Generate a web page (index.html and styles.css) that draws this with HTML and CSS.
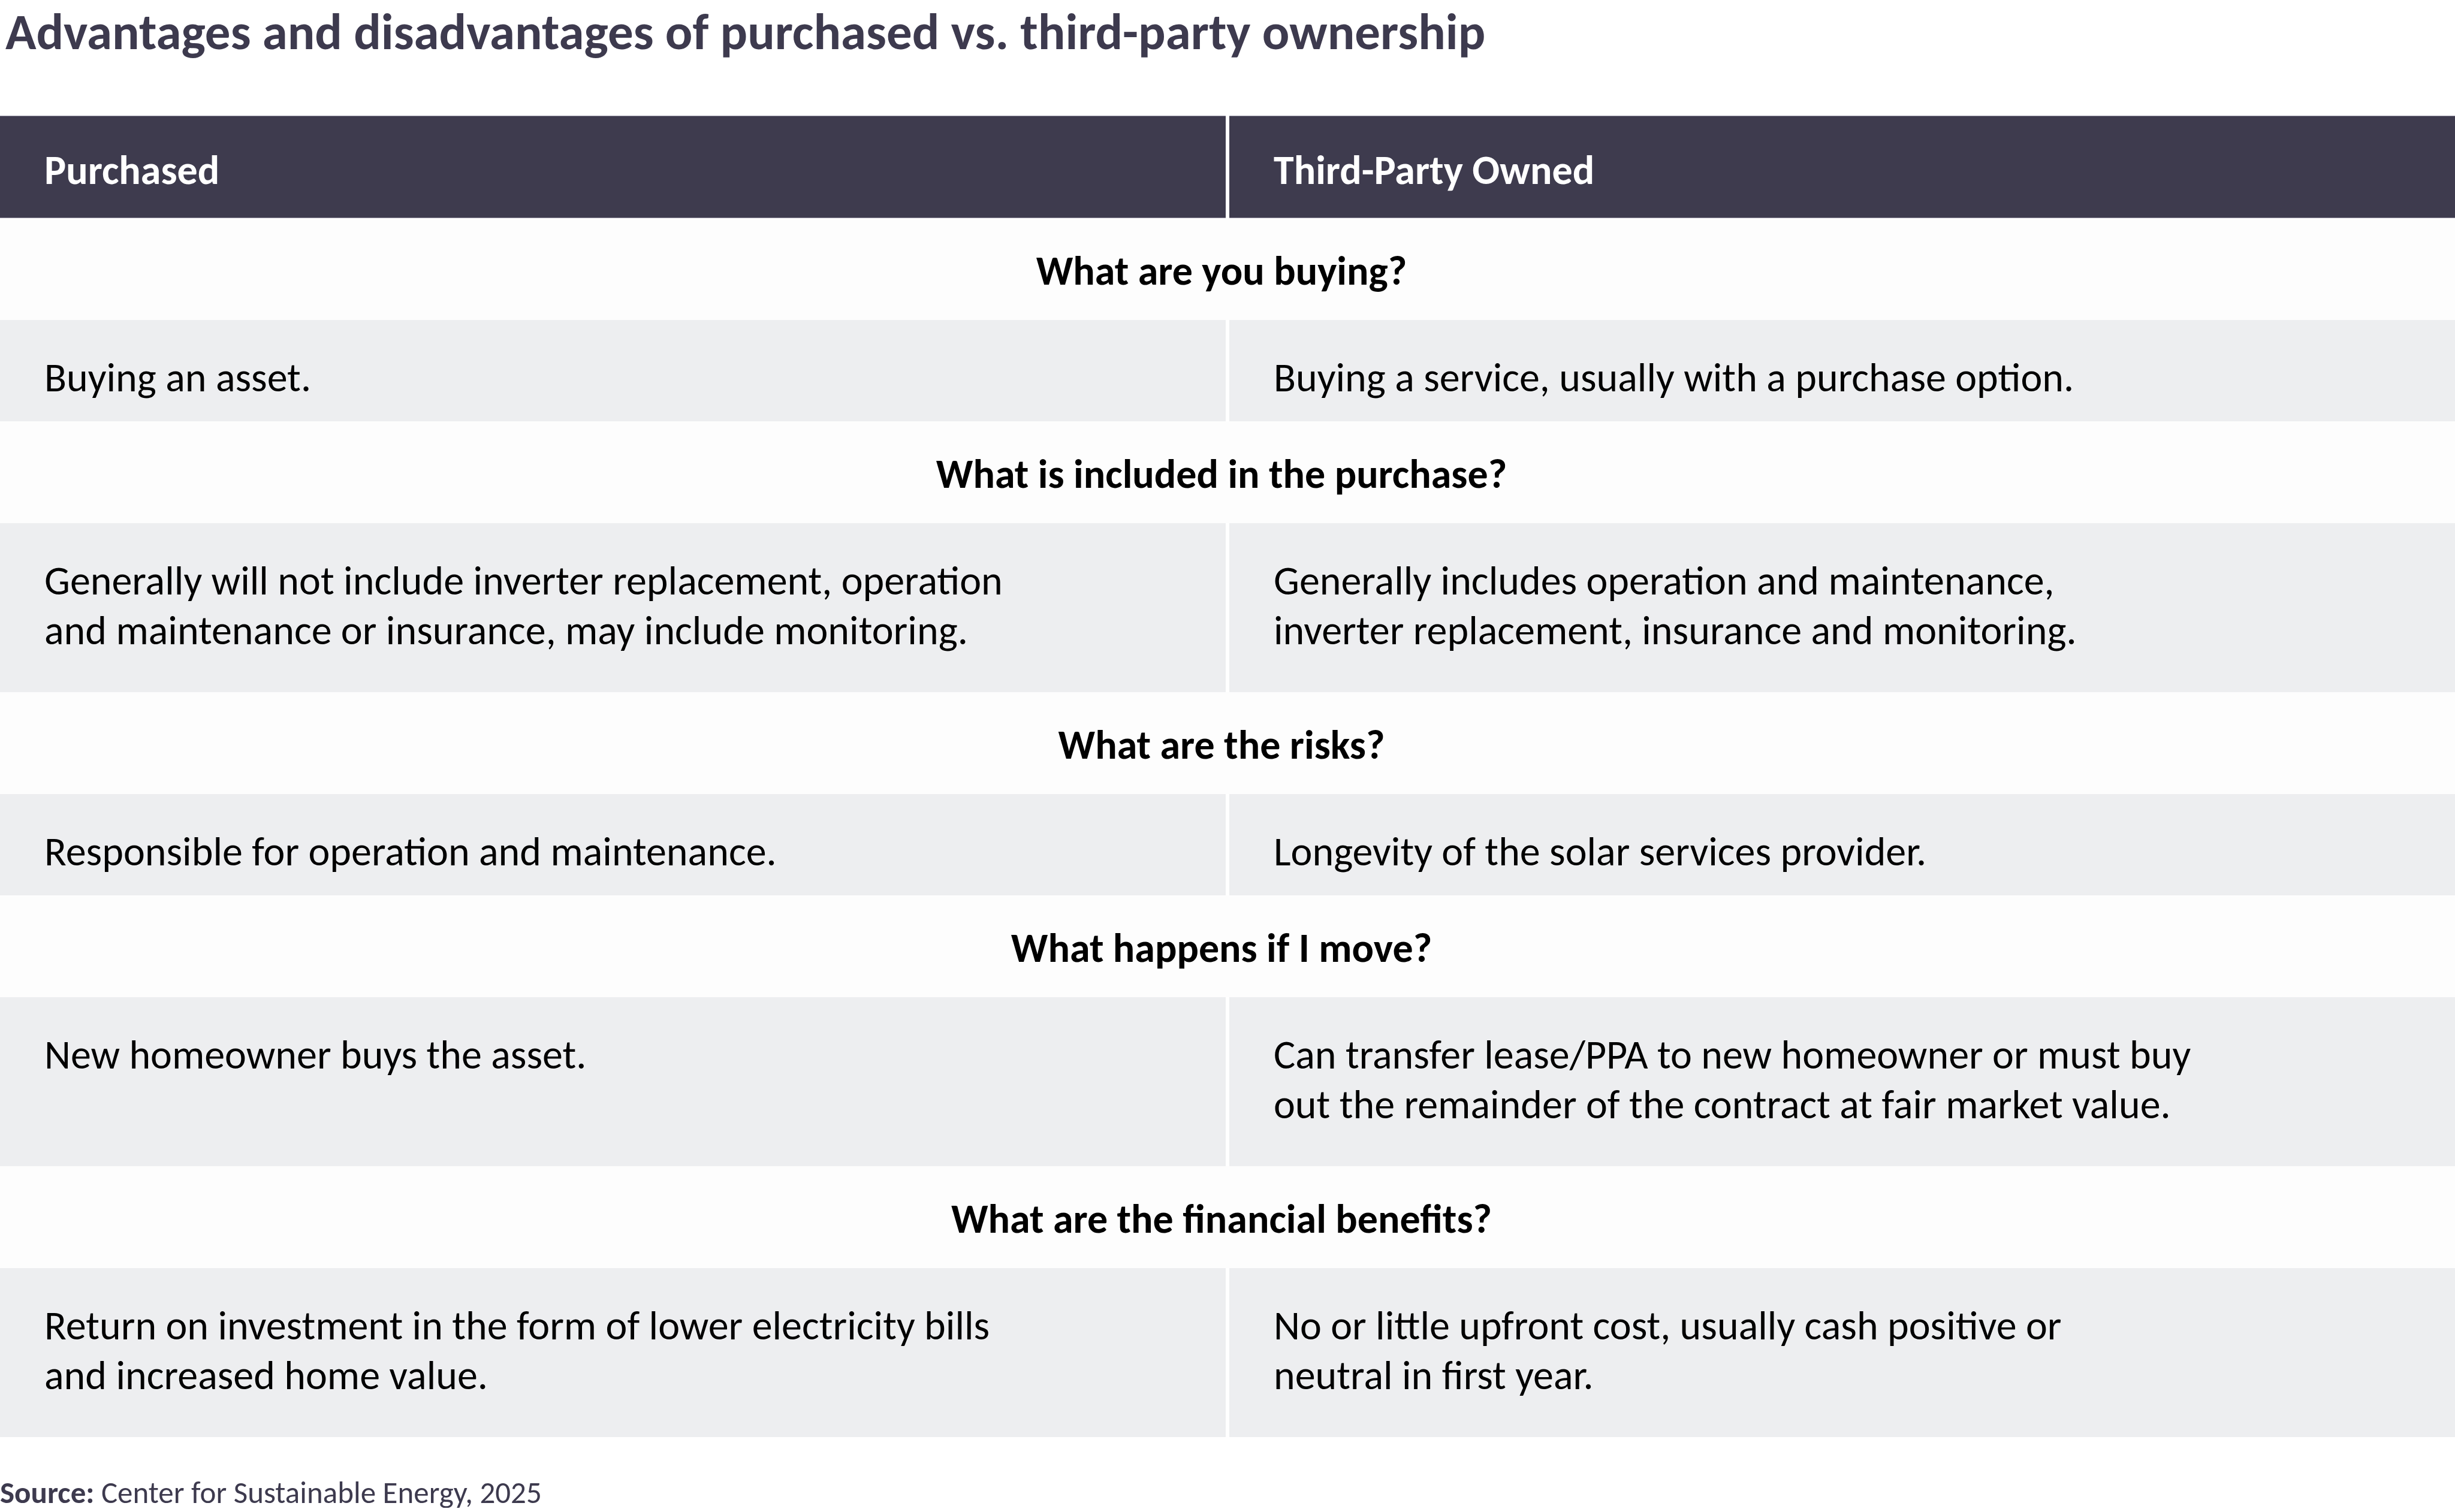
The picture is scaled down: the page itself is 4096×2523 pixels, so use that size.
FILE: index.html
```html
<!DOCTYPE html>
<html lang="en">
<head>
<meta charset="utf-8">
<title>Advantages and disadvantages of purchased vs. third-party ownership</title>
<link rel="stylesheet" href="styles.css">
</head>
<body>
<div class="page">
  <h1 class="title">Advantages and disadvantages of purchased vs. third-party ownership</h1>
  <div class="table">
    <div class="row head">
      <div class="cell">Purchased</div>
      <div class="cell">Third-Party Owned</div>
    </div>
    <div class="question">What are you buying?</div>
    <div class="row body">
      <div class="cell">Buying an asset.</div>
      <div class="cell">Buying a service, usually with a purchase option.</div>
    </div>
    <div class="question">What is included in the purchase?</div>
    <div class="row body tall">
      <div class="cell">Generally will not include inverter replacement, operation<br>and maintenance or insurance, may include monitoring.</div>
      <div class="cell">Generally includes operation and maintenance,<br>inverter replacement, insurance and monitoring.</div>
    </div>
    <div class="question">What are the risks?</div>
    <div class="row body">
      <div class="cell">Responsible for operation and maintenance.</div>
      <div class="cell">Longevity of the solar services provider.</div>
    </div>
    <div class="question">What happens if I move?</div>
    <div class="row body tall">
      <div class="cell">New homeowner buys the asset.</div>
      <div class="cell">Can transfer lease/PPA to new homeowner or must buy<br>out the remainder of the contract at fair market value.</div>
    </div>
    <div class="question">What are the financial benefits?</div>
    <div class="row body tall">
      <div class="cell">Return on investment in the form of lower electricity bills<br>and increased home value.</div>
      <div class="cell">No or little upfront cost, usually cash positive or<br>neutral in first year.</div>
    </div>
  </div>
  <p class="source"><strong>Source:</strong> Center for Sustainable Energy, 2025</p>
</div>
</body>
</html>
```

FILE: styles.css
```css
html, body {
  margin: 0;
  padding: 0;
  background: #ffffff;
}

.page {
  width: 4096px;
  font-family: "Carlito", "Calibri", "Lato", "Open Sans", sans-serif;
  color: #000000;
}

.title {
  margin: 0;
  padding: 11px 0 0 9px;
  height: 193px;
  box-sizing: border-box;
  font-size: 85px;
  line-height: 85px;
  font-weight: 700;
  color: #3d3a4e;
}

.table {
  display: flex;
  flex-direction: column;
  width: 4096px;
}

.row {
  display: grid;
  grid-template-columns: 1fr 1fr;
  column-gap: 6px;
}

.cell {
  padding-left: 74px;
  box-sizing: border-box;
  font-size: 68px;
  line-height: 83px;
}

.head {
  height: 171px;
}

.head .cell {
  background: #3e3b4e;
  color: #ffffff;
  font-weight: 700;
  padding-top: 48px;
  border-top: 1px solid #8f8c9c;
  border-bottom: 1px solid #8f8c9c;
}

.question {
  height: 170px;
  box-sizing: border-box;
  padding: 46px 20px 0 0;
  text-align: center;
  background: #fdfdfd;
  font-weight: 700;
  font-size: 68px;
  line-height: 83px;
}

.body {
  height: 169px;
}

.body.tall {
  height: 282px;
}

.body .cell {
  background: #edeef0;
  padding-top: 54px;
}

.source {
  margin: 0;
  padding: 67px 0 0 0;
  font-size: 51px;
  line-height: 51px;
  color: #3d3a4e;
}

.source strong {
  font-weight: 700;
}
```
